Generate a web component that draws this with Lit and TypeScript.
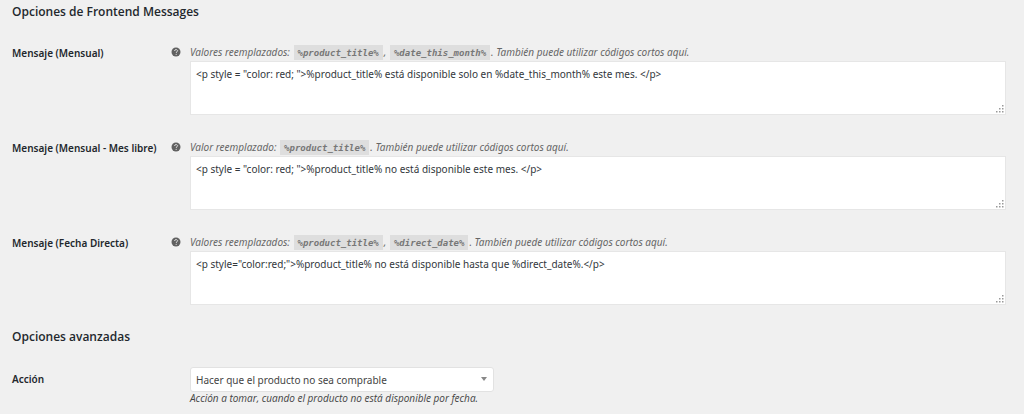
import { LitElement, html, css } from "lit";
import { customElement, property } from "lit/decorators.js";

interface MessageField {
  id: string;
  label: string;
  intro: string;
  tokens: string[];
  value: string;
}

const FIELDS: MessageField[] = [
  {
    id: "monthly",
    label: "Mensaje (Mensual)",
    intro: "Valores reemplazados:",
    tokens: ["%product_title%", "%date_this_month%"],
    value:
      '<p style = "color: red; ">%product_title% está disponible solo en %date_this_month% este mes. </p>',
  },
  {
    id: "free-month",
    label: "Mensaje (Mensual - Mes libre)",
    intro: "Valor reemplazado:",
    tokens: ["%product_title%"],
    value:
      '<p style = "color: red; ">%product_title% no está disponible este mes. </p>',
  },
  {
    id: "direct-date",
    label: "Mensaje (Fecha Directa)",
    intro: "Valores reemplazados:",
    tokens: ["%product_title%", "%direct_date%"],
    value:
      '<p style="color:red;">%product_title% no está disponible hasta que %direct_date%.</p>',
  },
];

@customElement("message-row")
export class MessageRow extends LitElement {
  @property({ attribute: false }) field!: MessageField;

  static styles = css`
    :host {
      display: grid;
      grid-template-columns: 158px 20px minmax(0, 1fr);
    }
    .label {
      font-size: 10px;
      font-weight: 600;
      line-height: 16px;
      padding-top: 2px;
      color: #23282d;
      white-space: nowrap;
    }
    .help {
      display: block;
      width: 10px;
      height: 10px;
      margin-top: 4px;
      margin-left: 1px;
    }
    .description {
      margin: 0;
      font-size: 10px;
      font-style: italic;
      line-height: 18px;
      color: #666;
    }
    .token {
      font: italic 600 9px/14px "DejaVu Sans Mono", "Liberation Mono", monospace;
      padding: 3px 4px 2px;
      margin: 0 1px;
      background: #dedede;
      color: #777;
    }
    .box {
      position: relative;
    }
    .input {
      display: block;
      box-sizing: border-box;
      width: 100%;
      height: 54px;
      margin: 0;
      padding: 3px 5px;
      border: 1px solid #e6e6e6;
      border-radius: 0;
      background: #fff;
      color: #32373c;
      font: 10px/18px "Noto Sans", "Open Sans", sans-serif;
      resize: none;
      outline: none;
    }
    .grip {
      position: absolute;
      right: 2px;
      bottom: 2px;
      width: 8px;
      height: 8px;
      pointer-events: none;
    }
  `;

  render() {
    const f = this.field;
    return html`
      <label class="label" for=${f.id}>${f.label}</label>
      <svg class="help" viewBox="0 0 20 20" aria-hidden="true">
        <circle cx="10" cy="10" r="9" fill="#606060" />
        <path
          d="M7 7.800C7.200 6 8.400 5.200 10.100 5.200c1.800 0 3 .9 3 2.300 0 2.100-2.800 2.200-2.800 4.300"
          fill="none"
          stroke="#e4e4e4"
          stroke-width="1.900"
        />
        <circle cx="10.300" cy="14.600" r="1.200" fill="#e4e4e4" />
      </svg>
      <div>
        <p class="description">
          ${f.intro}
          ${f.tokens.map(
            (t, i) => html`${i ? ", " : ""}<code class="token">${t}</code>`
          )}. También puede utilizar códigos cortos aquí.
        </p>
        <div class="box">
          <textarea
            class="input"
            id=${f.id}
            spellcheck="false"
            .value=${f.value}
          ></textarea>
          <svg class="grip" viewBox="0 0 8 8" fill="#999" aria-hidden="true">
            <path
              d="M6 0h1.500v1.500H6zM6 3h1.500v1.500H6zM3 3h1.500v1.500H3zM6 6h1.500v1.500H6zM3 6h1.500v1.500H3zM0 6h1.500v1.500H0z"
            />
          </svg>
        </div>
      </div>
    `;
  }
}

@customElement("app-root")
export class AppRoot extends LitElement {
  static styles = css`
    :host {
      display: block;
      box-sizing: border-box;
      min-height: 100vh;
      padding: 3px 18px 8px 12px;
      background: #f0f0f0;
      font-family: "Noto Sans", "Open Sans", sans-serif;
    }
    .title {
      margin: 0;
      font-family: "Open Sans", "Noto Sans", sans-serif;
      font-size: 12px;
      font-weight: 600;
      line-height: 18px;
      color: #23282d;
    }
    .messages {
      display: grid;
      gap: 23px;
      margin: 22px 0 23px;
    }
    .action {
      display: grid;
      grid-template-columns: 178px minmax(0, 1fr);
      margin-top: 21px;
    }
    .label {
      font-size: 10px;
      font-weight: 600;
      line-height: 16px;
      padding-top: 4px;
      color: #23282d;
    }
    .picker {
      position: relative;
      width: 304px;
      max-width: 100%;
    }
    .select {
      display: block;
      appearance: none;
      box-sizing: border-box;
      width: 100%;
      height: 25px;
      padding: 0 20px 0 5px;
      border: 1px solid #e2e2e2;
      border-radius: 3px;
      background: #fff;
      color: #444;
      font: 10px/18px "Noto Sans", "Open Sans", sans-serif;
    }
    .arrow {
      position: absolute;
      right: 7px;
      top: 10px;
      width: 6px;
      height: 4px;
      pointer-events: none;
    }
    .note {
      margin: 0;
      font-family: "Open Sans", "Noto Sans", sans-serif;
      font-size: 10px;
      font-style: italic;
      line-height: 12px;
      color: #444;
    }
  `;

  render() {
    return html`
      <h2 class="title">Opciones de Frontend Messages</h2>
      <div class="messages">
        ${FIELDS.map((f) => html`<message-row .field=${f}></message-row>`)}
      </div>
      <h2 class="title">Opciones avanzadas</h2>
      <div class="action">
        <label class="label" for="action">Acción</label>
        <div>
          <div class="picker">
            <select class="select" id="action" aria-describedby="action-note">
              <option>Hacer que el producto no sea comprable</option>
            </select>
            <svg class="arrow" viewBox="0 0 6 4" aria-hidden="true">
              <path d="M0 0h6L3 4z" fill="#888" />
            </svg>
          </div>
          <p class="note" id="action-note">
            Acción a tomar, cuando el producto no está disponible por fecha.
          </p>
        </div>
      </div>
    `;
  }
}
